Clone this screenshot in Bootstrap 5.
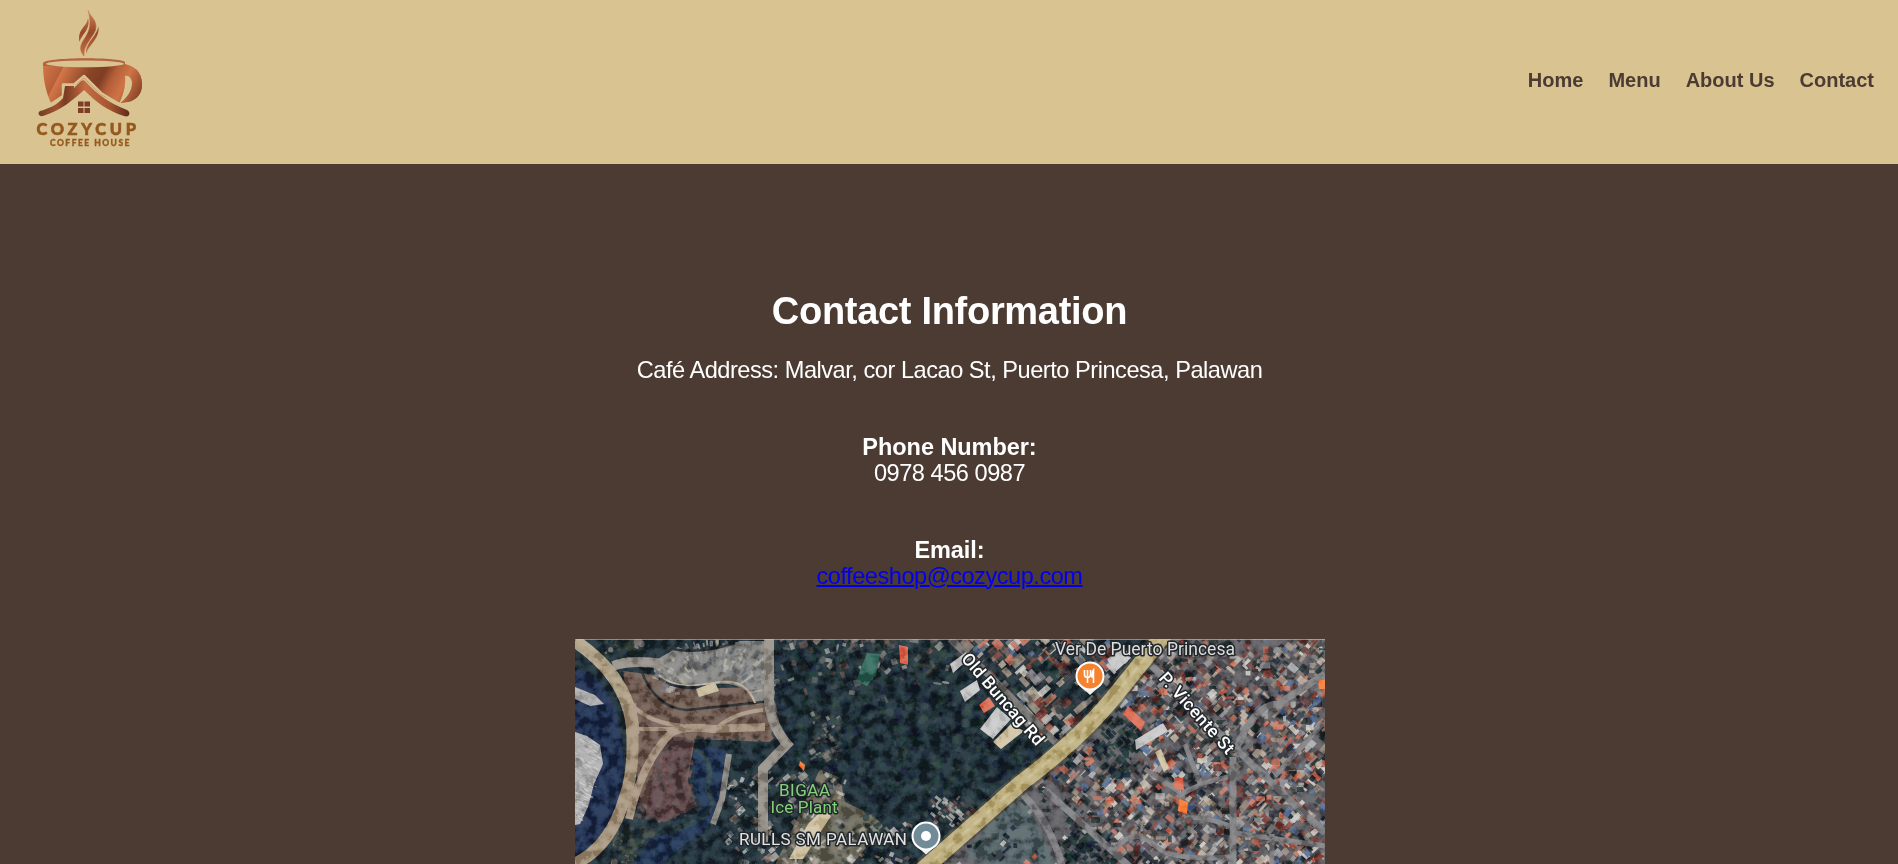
<!DOCTYPE html>
<html lang="en">
<head>
<meta charset="utf-8">
<meta name="viewport" content="width=device-width, initial-scale=1">
<title>CozyCup Coffee House - Contact</title>
<link href="https://cdn.jsdelivr.net/npm/bootstrap@5.3.0/dist/css/bootstrap.min.css" rel="stylesheet">
<style>
  body { font-family: "Liberation Sans", Arial, sans-serif; background: #4c3b32; color: #fff; height: 100vh; overflow: hidden; }
  .site-header { background: #d9c391; height: 164px; padding: 0 24px 4px 0; }
  .site-header .brand-logo { width: 180px; height: 164px; margin-bottom: -4px; }
  .site-nav { gap: 25px; }
  .site-nav .nav-link { padding: 0; color: #4c3b32; font-size: 20px; font-weight: 700; line-height: 24px; }
  .site-nav .nav-link:hover { color: #96591f; }
  .contact { padding: 125px 0 0 1px; }
  .contact h1 { font-size: 38px; font-weight: 700; line-height: 44px; margin: 0 0 24px; letter-spacing: -.3px; }
  .contact p { font-size: 23.600px; line-height: 26px; margin: 0 0 51px; letter-spacing: -.48px; }
  .contact p:last-of-type { margin-bottom: 50px; }
  .contact strong { font-size: 23.500px; letter-spacing: -.05px; }
  .contact a { color: #00e; text-decoration-thickness: 2px; }
  .map-view { width: 750px; height: 230px; }
</style>
</head>
<body>
<header class="site-header d-flex align-items-center justify-content-between">
  <svg class="brand-logo" viewBox="0 0 180 164" role="img" aria-label="CozyCup Coffee House">
    <defs>
      <linearGradient id="copper" x1="43" y1="60" x2="140" y2="110" gradientUnits="userSpaceOnUse">
        <stop offset="0" stop-color="#d97848"/><stop offset=".19" stop-color="#b5603a"/><stop offset=".2" stop-color="#d57748"/>
        <stop offset=".42" stop-color="#8b4629"/><stop offset=".55" stop-color="#7f3d23"/><stop offset=".64" stop-color="#b35e39"/>
        <stop offset=".76" stop-color="#d07446"/><stop offset="1" stop-color="#6d331c"/>
      </linearGradient>
      <linearGradient id="roof" x1="38" x2="130" y1="0" y2="0" gradientUnits="userSpaceOnUse">
        <stop offset="0" stop-color="#743b24"/><stop offset=".2" stop-color="#9d5332"/><stop offset=".3" stop-color="#7a3c24"/>
        <stop offset=".52" stop-color="#c66c42"/><stop offset=".78" stop-color="#a45432"/><stop offset="1" stop-color="#5e2b18"/>
      </linearGradient>
      <linearGradient id="steam" x1="0" x2="0" y1="9" y2="56" gradientUnits="userSpaceOnUse">
        <stop offset="0" stop-color="#d98555"/><stop offset=".5" stop-color="#96492b"/><stop offset="1" stop-color="#c77146"/>
      </linearGradient>
    </defs>
    <path fill="url(#steam)" stroke="url(#steam)" stroke-width=".5" d="M88 10C90 17 98 20 95.500 30C92 39 83 45 84 56C78 49 81 44 85 38C91 29 91 22 88 10Z"/>
    <path fill="url(#steam)" d="M88 18C87 27 77 29 79.500 42C82 34 91 29 88 18ZM98.500 26C96 38 86 41 86 54C89 44 100 39 98.500 26Z"/>
    <path fill="url(#copper)" fill-rule="evenodd" d="M43 64C43 57 125 57 125 64C134 66 142 72 142 84C142 96 133 104 121 102L127 76C114 106 62 102 51 103C45 90 43 77 43 64ZM125 76C126 87 123 95 121 101C127 96 132 91 132 84C132 79 129 75 125 76Z"/>
    <path fill="url(#copper)" d="M98 95Q106 74 136 69Q142 75 142 85Q142 101 121 103Z"/>
    <path fill="#b36540" d="M43 63C47 57 119 57 125 62L125 66H43Z"/>
    <ellipse cx="85" cy="63.800" rx="39" ry="3.400" fill="#d9c391"/>
    <path d="M125 76C126 87 123 95 119 104C127 98 132 91 132 83C132 79 129 75 125 76Z" fill="#d9c391"/>
    <path d="M44 110L63 96V85H75L84 78L100 94L128 112L119 118H43Z" fill="#d9c391"/>
    <path d="M48 106L63 96V84.500H74L84 76L101 93L119 104" fill="none" stroke="#d9c391" stroke-width="2.500" stroke-linejoin="round"/>
    <path d="M63 98C57 105 48 109 40 111C37 113 39 117 43 116C62 110 74 99 84 90C96 102 108 111 124 116C130 118 131 112 127 110C109 103 98 95 86 82Q84 79 81 81L74 88V86H65Z" fill="url(#roof)"/>
    <path fill="#7c3e25" d="M78 101.500h5.500v5h-5.500zM84.500 101.500h5.500v5h-5.500zM78 108h5.500v5h-5.500zM84.500 108h5.500v5h-5.500z"/>
    <g font-family="Lato, sans-serif" font-weight="900" fill="#95591f" stroke="#95591f">
      <text x="36.500" y="134.500" font-size="16.400" stroke-width=".6" textLength="99.500" lengthAdjust="spacing">COZYCUP</text>
      <text x="50" y="146.200" font-size="8.500" stroke-width=".3" textLength="79.500" lengthAdjust="spacing">COFFEE HOUSE</text>
    </g>
  </svg>
  <nav class="site-nav nav flex-nowrap">
    <a class="nav-link" href="#">Home</a>
    <a class="nav-link" href="#">Menu</a>
    <a class="nav-link" href="#">About Us</a>
    <a class="nav-link" href="#">Contact</a>
  </nav>
</header>

<main class="contact d-flex flex-column align-items-center text-center">
  <h1>Contact Information</h1>
  <p>Café Address: Malvar, cor Lacao St, Puerto Princesa, Palawan</p>
  <p><strong>Phone Number:</strong><br>0978 456 0987</p>
  <p><strong>Email:</strong><br><a href="mailto:coffeeshop@cozycup.com">coffeeshop@cozycup.com</a></p>

  <svg class="map-view d-block flex-shrink-0" viewBox="0 0 750 230" role="img" aria-label="Satellite map of the café area">
    <defs>
      <filter id="soft" x="0" y="0" width="100%" height="100%"><feGaussianBlur stdDeviation=".75"/></filter>
      <filter id="grain" x="0" y="0" width="100%" height="100%">
        <feTurbulence type="fractalNoise" baseFrequency=".09" numOctaves="5" seed="8"/>
        <feColorMatrix values="3.400 0 0 0 -1.250  3.400 0 0 0 -1.250  3.400 0 0 0 -1.250  0 0 0 0 1"/>
      </filter>
    </defs>
    <g filter="url(#soft)">
      <path fill="#1c2933" d="M0 0H750V230H0Z"/>
      <path fill="#55555a" d="M590 0H750V230H355L500 100Z"/>
      <path fill="#1b2a48" d="M0 30C35 35 50 85 48 135C46 175 28 205 0 218Z"/>
      <path fill="#aaa9a9" d="M0 93L12 97L25 106L28 125L19 145L13 168L5 185L0 186ZM0 48l20 8 9 9-14 2-15-7Z"/>
      <path fill="#69544c" d="M48 32L80 36Q85 47 112 50L180 48L200 62L206 92L195 103L120 100L108 166L84 184L66 165L56 90Z"/>
      <path fill="#543f42" d="M82 107Q97 92 118 102L112 140L122 167L90 183L70 180Z"/>
      <path fill="#7e7e7b" d="M78 23L103 8Q120 17 165 2H190L201 45L199 60L182 66Q170 42 142 45Q98 49 79 33Z"/>
      <path fill="#656354" d="M245 130l20 9 5 24 28 13 10 11-34 43h-76l25-52Z"/>
      <path fill="#4d5b60" d="M430 163l23 4 30 63h-58l-35-13Z"/>
      <g id="scatter"></g>
      <path fill="#1e2d4b" d="M119 110Q137 106 153 113L149 150Q138 192 110 205L80 230H55L77 199Q118 190 129 167Q114 155 119 110Z"/>
      <path fill="none" stroke="#31473f" stroke-width="5" opacity=".6" d="M121 110Q140 122 132 150Q145 165 125 180L95 195"/>
      <path fill="none" stroke="#252c2c" stroke-width="2.500" d="M66 31Q80 69 112 71L197 62M90 8Q120 17 160 4"/>
      <path fill="none" stroke="#b9a998" stroke-width="2" d="M84 36C100 51 127 46 144 43Q171 39 180 64"/>
      <path fill="none" stroke="#8d8880" stroke-width="10" d="M38 27Q55 20 88 25M194 0V45Q191 81 212 105L188 130V205"/>
      <path fill="none" stroke="#85827c" stroke-width="6" d="M154 115L147 160L138 185"/>
      <path fill="none" stroke="#a99a80" stroke-width="13" d="M0 2Q26 20 39 39Q57 65 58 95"/>
      <path fill="none" stroke="#a08e76" stroke-width="12" d="M55 65Q62 125 50 158Q35 210 -3 226"/>
      <path fill="none" stroke="#a08d79" stroke-width="8" d="M54 180Q66 125 95 95Q106 86 138 90L190 88"/>
      <path fill="none" stroke="#a08d79" stroke-width="4" d="M58 67Q75 84 108 87M58 90H100M140 90Q160 73 188 71"/>
      <path fill="#c0b594" d="M121 50l19-7 4 9-20 6Z"/>
      <g fill="none" stroke="#77777a" stroke-width="7">
        <path stroke="#6a6966" d="M375 0L406 28L490 113"/>
        <path d="M469 150L510 187L555 228M440 148Q474 177 488 230"/>
        <path d="M658 118V230M661 110L750 194M661 110Q680 65 703 65L750 35M575 25L661 111"/>
        <path d="M570 130L605 153M602 158Q625 143 653 138M602 184Q615 172 655 187M660 194L750 207M540 210Q560 186 582 208Q597 222 655 218M697 195V230M625 144L610 105M700 137L750 82" stroke-width="5"/>
      </g>
      <path fill="#c5c4c4" d="M405 90l17-22 14 12-18 20ZM375 25l16-12 3 7-16 14ZM385 52l17-11 3 10-15 12ZM560 101l28-17 5 8-32 19ZM532 20l17-11 7 10-17 15Z"/>
      <path fill="#cdbfa0" d="M418 103l18-18 13 7-23 18ZM586 110l8 19-5 4-9-20ZM233 185l15-15 8 7-28 43h-14Z"/>
      <path fill="#2f6255" d="M281 42l11-28 13 1-4 21-9 11Z"/>
      <path fill="#d9654d" d="M548 75l5-8 17 16-4 9ZM324 6l9 2v18l-8-2ZM404 66l10-8 6 9-11 7ZM600 138l8 1 1 13-10-3Z"/>
      <path fill="#f5712f" d="M604 160l9 3-1 12-9-3ZM743 42l7-2v10h-6ZM225 122l5 4-1 6-5-5Z"/>
      <path fill="none" stroke="#45433b" stroke-width="21" opacity=".7" d="M343 234L445 145Q510 97 545 50L592 -8"/>
      <path fill="none" stroke="#b7a876" stroke-width="16.500" d="M344 234L446 144Q511 95 546 49L592 -8"/>
      <path fill="none" stroke="#cfc08b" stroke-width="3" stroke-dasharray="13 5" opacity=".5" d="M344 234L446 144Q511 95 546 49L592 -8"/>
    </g>
    <rect width="750" height="230" filter="url(#grain)" opacity=".4" style="mix-blend-mode:soft-light"/>
    <path fill="#cbc6bb" opacity=".6" d="M0 0H750V1H0Z"/>

    <g font-family="Roboto, sans-serif" fill="#fff" stroke="#22272b" stroke-width="3" stroke-linejoin="round" paint-order="stroke">
      <text x="480" y="16" font-size="17.500" fill="#dedede" textLength="180">Ver De Puerto Princesa</text>
      <text x="164" y="205.500" font-size="17" fill="#e4e4e4" textLength="168">RULLS SM PALAWAN</text>
      <g fill="#83d17b">
        <text x="204" y="157" font-size="17" textLength="51">BIGAA</text>
        <text x="195.500" y="174" font-size="17" textLength="67">Ice Plant</text>
      </g>
      <g font-weight="500" font-size="17.500" text-anchor="middle">
        <text transform="translate(428 60) rotate(49)" y="6" textLength="116">Old Buncag Rd</text>
        <text transform="translate(622 74) rotate(48)" y="6" textLength="103">P. Vicente St</text>
      </g>
    </g>

    <path d="M503 45L515 56L527 45Z" fill="#eee"/>
    <circle cx="515" cy="37" r="13.500" fill="#f5822f" stroke="#fff" stroke-width="2"/>
    <path d="M509.500 31v4.500a3 3 0 0 0 6 0v-4.500M512.500 31v13M518.500 44v-13q-1.500 2-1.500 7h1.500" fill="none" stroke="#fff" stroke-width="1.600"/>
    <path d="M339 205L351 215.500L363 205Z" fill="#eee"/>
    <circle cx="351" cy="197" r="13.500" fill="#728b98" stroke="#fff" stroke-width="2"/>
    <circle cx="351" cy="197" r="5" fill="#fff"/>
  </svg>
</main>

<script src="https://cdn.jsdelivr.net/npm/bootstrap@5.3.0/dist/js/bootstrap.bundle.min.js"></script>
<script>
  // Rooftops and tree canopies of the satellite view, from a fixed seed.
  let seed = 73;
  const rnd = () => (seed = (seed * 16807) % 2147483647) / 2147483647;
  const pick = a => a[Math.floor(rnd() * a.length)];
  const roofs = ['#b0604f', '#7a3931', '#cd7058', '#b9aa9b', '#cfccc5', '#8d8d90', '#706b6a', '#463d40', '#2a3038', '#1d252c', '#232f2e', '#978878', '#50688f', '#5c3432', '#1f2e2d', '#a7a9a9', '#20262c', '#8b7a70'];
  const trees = ['#15242c', '#1f3035', '#131f31', '#23352f', '#16292a', '#2a3b3d', '#101b27', '#1b2c2c'];
  const pale = ['#c1beb6', '#8e8e8b', '#4f5557', '#a49a8d', '#2a3439', '#1c2933', '#34423f', '#81665b', '#dad8d2'];
  let out = '';
  const block = (x, y, w, h, turn, fill, o = 1) =>
    out += `<rect x="${(-w / 2).toFixed(1)}" y="${(-h / 2).toFixed(1)}" width="${w.toFixed(1)}" height="${h.toFixed(1)}" transform="translate(${x.toFixed(1)} ${y.toFixed(1)}) rotate(${turn})" fill="${fill}" opacity="${o}"/>`;
  const dot = (x, y, r, fill, o) =>
    out += `<circle cx="${x.toFixed(1)}" cy="${y.toFixed(1)}" r="${r.toFixed(1)}" fill="${fill}" opacity="${o}"/>`;
  const roadX = y => y < 94 ? 585 - y * .86 : 505 - (y - 94) * 1.15;
  // tree cover between the stadium road and the main road
  for (let i = 0; i < 1900; i++) {
    const y = rnd() * 230, x = 200 + rnd() * 300;
    if (x > roadX(y) || (x < 290 && y > 150)) continue;
    dot(x, y, 1 + rnd() * 3.5, pick(trees), .75);
  }
  // scattered huts along the northern and western edges of the trees
  for (let i = 0; i < 110; i++) {
    const y = rnd() * rnd() * 62, x = 205 + rnd() * 180;
    block(x, y, 2 + rnd() * 7, 2 + rnd() * 5, pick([-20, 10, -45]), pick(['#5c5c58', '#8d8880', '#4a3c39', '#34423f', '#6d5248', '#bab7ae', '#252d30']), .6);
  }
  for (let i = 0; i < 60; i++)
    block(236 + rnd() * 30, 75 + rnd() * 45, 2 + rnd() * 5, 2 + rnd() * 4, -30, pick(['#4b4a47', '#81786c', '#33413b', '#c6bdb1', '#252d30']), .5);
  for (let i = 0; i < 55; i++)
    block(355 + rnd() * 45, 157 + rnd() * 32, 2 + rnd() * 7, 2 + rnd() * 3, 40, pick(['#6b4a43', '#9a9692', '#2a3439', '#c8c4bd']), .7);
  // dense housing to the east
  for (let i = 0; i < 2900; i++) {
    const y = rnd() * 230, x = 370 + rnd() * 380;
    if (x < roadX(y) + 12) continue;
    if (x < 490 && y > 140) { if (rnd() < .85) continue; }
    const grove = ((x - 543) / 25) ** 2 + ((y - 102) / 36) ** 2 < 1 || (x < 540 && y > 193 && x > 492);
    block(x, y, 3 + rnd() * 8, 2 + rnd() * 5, pick([-43, -43, 45, 40, -50, 0]), pick(grove || (x < 500 && rnd() < .5) ? trees : roofs), .9);
  }
  // north side of the main road
  for (let i = 0; i < 300; i++) {
    const y = rnd() * 100, x = 385 + y * .75 + rnd() * 150;
    if (x < roadX(y) - 8) block(x, y, 4 + rnd() * 11, 3 + rnd() * 7, pick([-42, 48]), pick(roofs), .85);
  }
  // buildings by the ice plant and along the west lane
  for (let i = 0; i < 340; i++) {
    const y = 132 + rnd() * 98, x = 150 + rnd() * 185;
    if (x < 200 || (x < 270 && y > 135) || y > 185) block(x, y, 2 + rnd() * 7, 2 + rnd() * 5, pick([-40, 48, 20]), pick(pale), .65);
  }
  // stadium seating wedges
  for (let i = 0; i < 150; i++) {
    const a = Math.PI * (1.02 + rnd() * .94), r = .65 + rnd() * .6;
    const x = 139 + Math.cos(a) * 53 * r, y = 58 + Math.sin(a) * 45 * r;
    if (y > 3) block(x, y, 3 + rnd() * 6, 1 + rnd() * 3, Math.round(a * 57.3), pick(['#a1a09b', '#676a70', '#565c67', '#8a8881', '#b3afa3']), .7);
  }
  // scrub around the clearing
  for (let i = 0; i < 700; i++) {
    const x = 60 + rnd() * 128, y = 98 + rnd() * 132;
    if (x + y * .5 < 145) continue;
    dot(x, y, .7 + rnd() * 2.2, x < 118 && y < 180 ? pick(['#674b49', '#553b43', '#714f47', '#454440']) : pick(trees), .55);
  }
  for (let i = 0; i < 90; i++) {
    const top = rnd() < .4;
    dot(top ? 30 + rnd() * 38 : 38 + rnd() * 45, top ? rnd() * 20 : 190 + rnd() * 38, 1 + rnd() * 4, pick(['#26342c', '#39423e', '#25302f', '#7c766e']), .8);
  }
  // ripples on the western fish ponds
  for (let i = 0; i < 90; i++) {
    const y = 100 + rnd() * 80;
    block(rnd() * (24 - Math.max(0, y - 140) * .45), y, 2 + rnd() * 5, 1, 30, pick(['#c9c8c6', '#85898f', '#d6d5d3']), .7);
  }
  document.getElementById('scatter').innerHTML = out;
</script>
</body>
</html>
